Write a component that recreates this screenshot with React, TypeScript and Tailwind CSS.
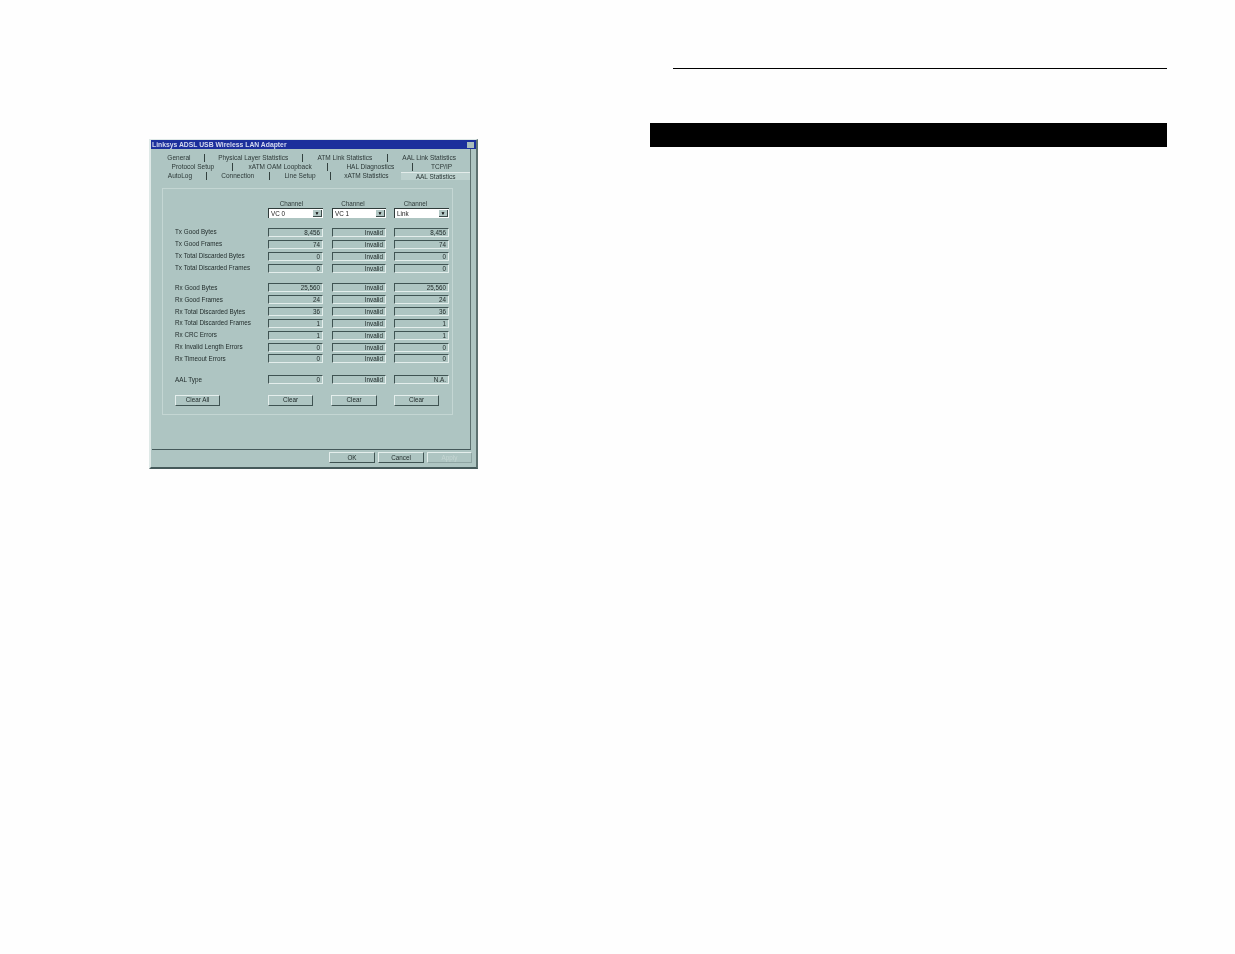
const tabRows = [
  [["General", "w-[51px]"], ["Physical Layer Statistics", "w-[98px]"], ["ATM Link Statistics", "w-[86px]"], ["AAL Link Statistics", "w-[82px]"]],
  [["Protocol Setup", "w-[79px]"], ["xATM OAM Loopback", "w-[96px]"], ["HAL Diagnostics", "w-[85px]"], ["TCP/IP", "w-[57px]"]],
  [["AutoLog", "w-[53px]"], ["Connection", "w-[63px]"], ["Line Setup", "w-[62px]"], ["xATM Statistics", "w-[70px]"], ["AAL Statistics", "w-[69px]"]],
];

const txRows = [
  ["Tx Good Bytes", "8,456", "8,456"],
  ["Tx Good Frames", "74", "74"],
  ["Tx Total Discarded Bytes", "0", "0"],
  ["Tx Total Discarded Frames", "0", "0"],
];

const rxRows = [
  ["Rx Good Bytes", "25,560", "25,560"],
  ["Rx Good Frames", "24", "24"],
  ["Rx Total Discarded Bytes", "36", "36"],
  ["Rx Total Discarded Frames", "1", "1"],
  ["Rx CRC Errors", "1", "1"],
  ["Rx Invalid Length Errors", "0", "0"],
  ["Rx Timeout Errors", "0", "0"],
];

function Field({ value, className }: { value: string; className: string }) {
  return (
    <div className={`h-[9px] border-t-[1.5px] border-l-[1.5px] border-[#3f5352] border-b border-b-[#e4eeec] border-r border-r-[#e4eeec] pr-[2px] text-right leading-[7px] text-[#1f2928] ${className}`}>
      {value}
    </div>
  );
}

function StatRow({ label, a, b, c = a, rowClass = "h-[12px]" }: { label: string; a: string; b?: string; c?: string; rowClass?: string }) {
  return (
    <div className={`flex items-center ${rowClass}`}>
      <div className="w-[93px] text-[#232e2d]">{label}</div>
      <Field value={a} className="w-[55px]" />
      <Field value={b ?? "Invalid"} className="ml-[9px] w-[54px]" />
      <Field value={c} className="ml-[8px] w-[55px]" />
    </div>
  );
}

function Dropdown({ value, className }: { value: string; className: string }) {
  return (
    <div className={`flex h-[10px] items-center justify-between border-t border-l border-[#2f3b3a] bg-white pl-[2px] pr-[1px] text-[#222] ${className}`}>
      <span>{value}</span>
      <span className="flex h-[7px] w-[9px] items-center justify-center border-r border-b border-[#3c4a49] bg-[#b3c8c5] text-[5px] text-black">▼</span>
    </div>
  );
}

function Btn({ label, className }: { label: string; className: string }) {
  return (
    <div className={`flex h-[11px] items-center justify-center border-t border-l border-[#e4eeec] border-r-[1.5px] border-b-[1.5px] border-r-[#3f5352] border-b-[#3f5352] text-[#232e2d] ${className}`}>
      {label}
    </div>
  );
}

export default function App() {
  return (
    <div className="flex h-[954px] w-[1235px] bg-[#fefefe] font-['Liberation_Sans',Arial,sans-serif]">
      <div className="w-[650px] pl-[149px] pt-[139px]">
        <div className="flex h-[330px] w-[329px] flex-col border-l-2 border-t border-r-2 border-b-2 border-l-[#dfe9e7] border-t-[#dfe9e7] border-r-[#5d7170] border-b-[#45595a] bg-[#aec5c2] text-[6.3px] leading-[8px] blur-[0.5px]">
          <div className="flex h-[9px] items-center justify-between bg-[#1c2f9c] pl-[1px] pr-[2px] text-[6.8px] font-bold text-[#d5daf0]">
            <span>Linksys ADSL USB Wireless LAN Adapter</span>
            <span className="h-[6px] w-[7px] bg-[#a9bdbb]" />
          </div>
          <div className="ml-[1px] mr-[5px] flex h-[301px] flex-col border-r-[1.5px] border-b-[1.5px] border-r-[#5d7170] border-b-[#45595a] pl-[2px]">
            <div className="mt-[5px] flex flex-col gap-[1px] text-[6.5px] text-[#2c3837]">
              {tabRows.map((row, i) => (
                <div key={i} className="flex h-[8px]">
                  {row.map(([name, w], j) => (
                    <div
                      key={name}
                      className={`flex items-center justify-center whitespace-nowrap ${w} ${name === "AAL Statistics" ? "border-t border-[#e3ecea] bg-[#bed2cf]" : ""} ${j < row.length - 1 && name !== "xATM Statistics" ? "border-r border-[#33413f]" : ""}`}
                    >
                      {name}
                    </div>
                  ))}
                </div>
              ))}
            </div>
            <div className="ml-[8px] mt-[8px] h-[227px] w-[291px] border border-[#c4d6d3] pl-[12px] pt-[10px]">
              <div className="flex h-[9px] items-center text-center text-[#2c3837]">
                <div className="ml-[93px] w-[47px]">Channel</div>
                <div className="ml-[15px] w-[46px]">Channel</div>
                <div className="ml-[16px] w-[47px]">Channel</div>
              </div>
              <div className="flex">
                <Dropdown value="VC 0" className="ml-[93px] w-[55px]" />
                <Dropdown value="VC 1" className="ml-[9px] w-[54px]" />
                <Dropdown value="Link" className="ml-[8px] w-[55px]" />
              </div>
              <div className="mt-[8px]">
                {txRows.map(([label, a, c]) => (
                  <StatRow key={label} label={label} a={a} c={c} />
                ))}
              </div>
              <div className="mt-[8px]">
                {rxRows.map(([label, a, c]) => (
                  <StatRow key={label} label={label} a={a} c={c} rowClass="h-[11.85px]" />
                ))}
              </div>
              <div className="mt-[9px]">
                <StatRow label="AAL Type" a="0" c="N.A." />
              </div>
              <div className="mt-[9px] flex">
                <Btn label="Clear All" className="w-[45px]" />
                <Btn label="Clear" className="ml-[48px] w-[45px]" />
                <Btn label="Clear" className="ml-[18px] w-[46px]" />
                <Btn label="Clear" className="ml-[17px] w-[45px]" />
              </div>
            </div>
          </div>
          <div className="flex flex-1 items-start justify-end gap-[3px] pr-[4px] pt-[2px]">
            <Btn label="OK" className="w-[46px] border-r-[#1f2928] border-b-[#1f2928]" />
            <Btn label="Cancel" className="w-[46px]" />
            <Btn label="Apply" className="w-[45px] border-r-[#8fa5a3] border-b-[#8fa5a3] text-[#c5d6d3]" />
          </div>
        </div>
      </div>
      <div className="w-[517px] pt-[68px]">
        <div className="ml-[23px] h-[1px] bg-black" />
        <div className="mt-[54px] h-[24px] bg-black" />
      </div>
    </div>
  );
}
